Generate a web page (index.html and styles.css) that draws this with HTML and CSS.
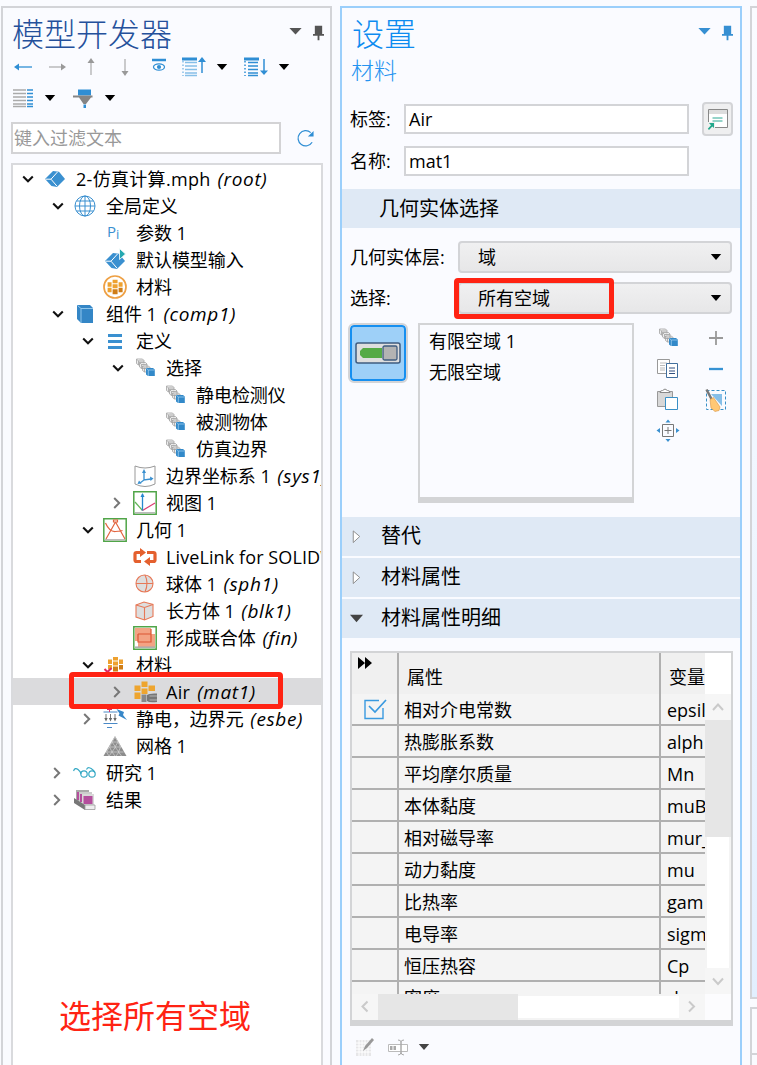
FILE: index.html
```html
<!DOCTYPE html>
<html lang="zh-CN">
<head>
<meta charset="utf-8">
<title>模型开发器</title>
<link rel="stylesheet" href="styles.css">
</head>
<body>
<svg class="defs" aria-hidden="true">
  <symbol id="down" viewBox="0 0 24 24"><path d="M7.2 9.6l4.8 4.6 4.8-4.6" fill="none" stroke="#111" stroke-width="2.1"/></symbol>
  <symbol id="right" viewBox="0 0 24 24"><path d="M8.200 7l5 5-5 5" fill="none" stroke="#777" stroke-width="2"/></symbol>
  <symbol id="caret" viewBox="0 0 12 8"><path d="M.8 1h10.400L6 7z" fill="currentColor"/></symbol>
  <symbol id="pin" viewBox="0 0 12 16"><path d="M2 0h8v9h2v2H7v5H5v-5H0V9h2z" fill="currentColor"/></symbol>
  <symbol id="cube" viewBox="0 0 24 24"><path d="M2 12l8-8 6 .8 6 7.200-8 8-5.500-1z" fill="#3a90d0"/><path d="M2.500 12.200H8M14.500 5L8 12.200l6 7" fill="none" stroke="#fff" stroke-width="1"/></symbol>
  <symbol id="globe" viewBox="0 0 24 24"><g fill="none" stroke="#3a90d0"><circle cx="12" cy="12" r="10"/><ellipse cx="12" cy="12" rx="5.500" ry="10"/><path d="M12 2v20M2 12h20M3.500 7h17M3.500 17h17"/></g></symbol>
  <symbol id="input" viewBox="0 0 24 24"><path d="M2 13l8-8 6 .8 6 7.200-8 8-5.500-1z" fill="#3a90d0"/><path d="M2.500 13.200H8M14.500 6L8 13.200l6 7" fill="none" stroke="#fff" stroke-width="1"/><path d="M16.500.5l6 5.500-6 5.500z" fill="#25a8b0" stroke="#fff" stroke-width=".8"/></symbol>
  <symbol id="bricks" viewBox="0 0 24 24"><g fill="#eea12f"><path d="M10 4.500h5V8h-5zM5 7h4v4.500H5zM10 9h5v4h-5zM5 12.500h4V17H5zM16 7h4v4.500h-4z"/></g><path d="M10 14h5v5h-5zM16 12.500h4V17h-4z" fill="#cf7d17"/></symbol>
  <symbol id="matring" viewBox="0 0 24 24"><circle cx="12" cy="12" r="11" fill="none" stroke="#eea044" stroke-width="1.700"/><use href="#bricks" width="24" height="24" x="-.4" y=".2"/></symbol>
  <symbol id="comp" viewBox="0 0 24 24"><path d="M4 3h13l3 3v15H8l-4-4z" fill="#3486c6"/><path d="M4.500 3.500l3.500 3h12M8 6.500V21" fill="none" stroke="#9ccff2" stroke-width=".9"/></symbol>
  <symbol id="bars" viewBox="0 0 24 24"><path d="M5 5h14v3H5zM5 11h14v3H5zM5 17h14v3H5z" fill="#3a90d0"/></symbol>
  <symbol id="sel" viewBox="0 0 24 24"><g fill="#ececec" stroke="#a2a2a2" stroke-width=".8"><path d="M3.500 3h6l1.500 1.500V9H5.500L3.500 7.500z"/><path d="M3.500 3l2 2H11M5.500 5v4M6.500 6.500h6L14 8v4.500H8.500L6.500 11zM6.500 6.500l2 2H14M8.500 8.500v4M9.500 10h6l1.500 1.500V16h-5.500l-2-1.500zM9.500 10l2 2H17M11.500 12v4"/></g><path d="M13 12h7l1.800 1.500V20H15l-2-1.500z" fill="#3289c9"/><path d="M13.300 12.300l2 1.700h6.200M15.300 14v6" fill="none" stroke="#a9d4f2" stroke-width=".7"/></symbol>
  <symbol id="coord" viewBox="0 0 24 24"><path d="M2 2q10 4 20 0v18q-10 5-20 0z" fill="none" stroke="#999" stroke-width="1"/><path d="M11 8v8l7-1M11 16l-4 3" fill="none" stroke="#3a90d0" stroke-width="1.300"/><path d="M9 9l2-4 2 4zM17 12.500l3.500 2-3 2.500zM4.500 20l1.500-3.500 2.500 3z" fill="#3a90d0"/></symbol>
  <symbol id="view" viewBox="0 0 24 24"><path d="M.8.8h22.400v22.400H.8z" fill="#fff" stroke="#50a548" stroke-width="1.500"/><path d="M2 21h20v1.500H2z" fill="#bbb"/><path d="M9.500 19.500L2 11" stroke="#62b458" stroke-width="1.200"/><path d="M9.500 19.500L22 12" stroke="#dc3d73" stroke-width="1.200"/><path d="M9.500 19.500V3" stroke="#2788ce" stroke-width="1.300"/><path d="M7.500 6l2-4 2 4z" fill="#2788ce"/></symbol>
  <symbol id="geom" viewBox="0 0 24 24"><path d="M.8.8h22.400v22.400H.8z" fill="#fff" stroke="#50a548" stroke-width="1.500"/><path d="M2 21h20v1.500H2z" fill="#bbb"/><path d="M12.500 4L3 21M12.500 4L22 21M2.500 5q4 9 10 8.500 6-.5 7-1M10.500 4h4V2h-4z" fill="none" stroke="#e2643f" stroke-width="1.200"/></symbol>
  <symbol id="link" viewBox="0 0 24 24"><path d="M8 16.500H3.500Q2 16.500 2 15V9q0-1.500 1.500-1.500H8M14 7.500h6.500Q22 7.500 22 9v6q0 1.500-1.500 1.500H16" fill="none" stroke="#e4602e" stroke-width="3.200"/><path d="M7 3v9l6-4.500zM17 12v9l-6-4.500z" fill="#e4602e"/></symbol>
  <symbol id="sphere" viewBox="0 0 24 24"><circle cx="11.500" cy="11.500" r="8.500" fill="#dedede" stroke="#e77857" stroke-width="1.100"/><path d="M3 11.500h17M12 3q4 8 0 17" fill="none" stroke="#e77857" stroke-width="1.100"/></symbol>
  <symbol id="block" viewBox="0 0 24 24"><path d="M3 6l8-3 9 2.500v12L11.500 21 3 18z" fill="#dedede" stroke="#e77857" stroke-width="1.100"/><path d="M3 6l8.500 2.500L20 5.500M11.500 8.500V21" fill="none" stroke="#e77857" stroke-width="1.100"/></symbol>
  <symbol id="union" viewBox="0 0 24 24"><path d="M.8.8h22.400v22.400H.8z" fill="#fff" stroke="#50a548" stroke-width="1.500"/><path d="M2 2h16v13H2zM5 8h17v13H5z" fill="#f3a384"/><path d="M5 8h13V3M5 8v8h13V8" fill="none" stroke="#dc5633" stroke-width="1.200"/><path d="M2 21.200h20" stroke="#aaa" stroke-width="1.500"/></symbol>
  <symbol id="mats" viewBox="0 0 24 24"><use href="#bricks" width="24" height="24" y="-.5"/><path d="M1.500 16l3 3 4-4" fill="none" stroke="#dd2a63" stroke-width="2"/></symbol>
  <symbol id="air" viewBox="0 0 24 24"><path d="M8.500 1.500h6V7h-6zM1.500 5.500h6V11h-6zM15.500 5.500h6.500V11h-6.500zM8.500 8.500h6V14h-6zM1.500 12.500h6V19h-6z" fill="#eea52f"/><path d="M8.500 14.500h5v7.500h-5z" fill="#888"/><path d="M14 15q2-2 10-1.500v8.500q-8 1-10-1z" fill="#777"/><path d="M16.500 16H24M16.500 20H24" stroke="#bbb" stroke-width=".9"/></symbol>
  <symbol id="esbe" viewBox="0 0 24 24"><path d="M.5 5h14M.5 16.500h14M4 20.500h5" stroke="#4a89c6" stroke-width="1"/><path d="M6.500 0v5M4 2.500h5" stroke="#d5336b" stroke-width="1"/><path d="M3 7v5M7.500 7v5M12 7v5" stroke="#777"/><path d="M1.300 11h3.400L3 14.500zM5.800 11h3.400l-1.700 3.500zM10.300 11h3.400L12 14.500z" fill="#666"/><path d="M13.500 2l7.500 3-1 3 4 5-8.500-4.500 1-2z" fill="#3787c8"/></symbol>
  <symbol id="mesh" viewBox="0 0 24 24"><path d="M12 2l11.500 20H.5z" fill="#8d8d8d"/><path d="M9 8h6M6.500 13h11M3.500 18h17M12 3l-3 5 3.500 5L9 18l3 4M12 3l3 5-3 5 4 5-3 4M9 8l-2.500 5L9 18l-3 4M15 8l2.500 5-2 5 3 4M6.500 13l-3 5 2.500 4" fill="none" stroke="#d4d4d4" stroke-width=".7"/></symbol>
  <symbol id="study" viewBox="0 0 24 24"><g fill="none" stroke="#36a9c5" stroke-width="1.200"><path d="M.5 10Q2 6 5 8.500T8 13M13.500 8.500q2-4 7 1l1.500 2"/><circle cx="11" cy="13" r="3.200"/><circle cx="19" cy="13" r="3.200"/></g></symbol>
  <symbol id="results" viewBox="0 0 24 24"><path d="M3 2h13v12H3z" fill="#aaa"/><path d="M4 4h9v8H4z" fill="#b44e9c"/><path d="M6 4h13v12H6z" fill="#ccc"/><path d="M7 6h9v8H7z" fill="#b44e9c"/><path d="M9 6h12v12H9z" fill="#d8d8d8"/><path d="M10.500 8h9v8h-9z" fill="#b44e9c"/><path d="M1 10l11 7v5L1 15z" fill="#777"/><path d="M12 17h10v4.500H12z" fill="#eee" stroke="#999" stroke-width=".8"/></symbol>
</svg>

<div class="app">
<section class="panel builder">
  <header class="panel-head">
    <h1>模型开发器</h1>
    <svg class="head-caret" viewBox="0 0 14 8"><path d="M0 0h14L7 7.500z" fill="currentColor"/></svg>
    <svg class="head-pin"><use href="#pin"/></svg>
  </header>
  <div class="toolbar">
    <svg class="tool" viewBox="0 0 24 24"><path d="M6 12h15" stroke="#2f8ed4" stroke-width="1.300"/><path d="M3 12l5-3.500v7z" fill="#2f8ed4"/></svg>
    <svg class="tool" viewBox="0 0 24 24"><path d="M4 12h14" stroke="#999"/><path d="M21 12l-5-3.500v7z" fill="#999"/></svg>
    <svg class="tool" viewBox="0 0 24 24"><path d="M12 6v14" stroke="#999"/><path d="M12 3L8.500 8h7z" fill="#999"/></svg>
    <svg class="tool" viewBox="0 0 24 24"><path d="M12 4v14" stroke="#999"/><path d="M12 21l-3.500-5h7z" fill="#999"/></svg>
    <svg class="tool" viewBox="0 0 24 24"><path d="M5 5h14" stroke="#2f8ed4" stroke-width="2.500"/><ellipse cx="12" cy="12" rx="5.500" ry="3.200" fill="#fff" stroke="#2f8ed4" stroke-width="1.300"/><circle cx="12" cy="12" r="2.100" fill="#2f8ed4"/></svg>
    <svg class="tool" viewBox="0 0 24 24"><path d="M1 4h15" stroke="#2f8ed4" stroke-width="3"/><path d="M4 7.500h12M4 11h12M4 14.500h12M4 18h12M4 20.500h12" stroke="#86bfe8" stroke-width="1.500"/><path d="M2 6v15" stroke="#86bfe8" stroke-dasharray="1.500 2" stroke-width="1.500"/><path d="M21 6v12" stroke="#2f8ed4" stroke-width="1.500"/><path d="M21 2l-4 5h8z" fill="#2f8ed4"/></svg>
    <svg class="caret c1"><use href="#caret"/></svg>
    <svg class="tool t2" viewBox="0 0 24 24"><path d="M1 4h15" stroke="#2f8ed4" stroke-width="3"/><path d="M5 7.500h10M5 11h10M5 14.500h10M5 18h10M5 20.500h10" stroke="#2f8ed4" stroke-width="1.700"/><path d="M2 6v15" stroke="#2f8ed4" stroke-dasharray="1.500 2" stroke-width="1.500"/><path d="M21 4v13" stroke="#2f8ed4" stroke-width="1.500"/><path d="M21 20l-4-4.500h8z" fill="#2f8ed4"/></svg>
    <svg class="caret c1"><use href="#caret"/></svg>
  </div>
  <div class="toolbar second">
    <svg class="tool" viewBox="0 0 24 24"><path d="M2 4h13M2 7.500h13M2 11h13M2 14.500h13M2 18h13M2 20.500h13" stroke="#aaa" stroke-width="1.500"/><path d="M16 4h6M16 7.500h6M16 11h6M16 14.500h6M16 18h6M16 20.500h6" stroke="#2f8ed4" stroke-width="1.700"/></svg>
    <svg class="caret c2"><use href="#caret"/></svg>
    <svg class="tool t3" viewBox="0 0 24 24"><path d="M7 3.500h13v6H7z" fill="#2f8ed4"/><path d="M2 9.500h19.500v2H20L15 18h-2.500L8 11.500H2z" fill="#858585"/><path d="M12.500 18.500H15V22h-2.500z" fill="#2f8ed4"/></svg>
    <svg class="caret c2"><use href="#caret"/></svg>
  </div>
  <div class="filter">
    <div class="filter-box">键入过滤文本</div>
    <svg class="refresh" viewBox="0 0 20 20"><path d="M15.500 3.800A8 8 0 1 0 17 14" fill="none" stroke="#2f8ed4" stroke-width="1.300"/><path d="M18.500 2v6h-6z" fill="#2f8ed4"/></svg>
  </div>
  <div class="tree">
    <div class="row l0"><svg class="tw"><use href="#down"/></svg><svg class="ic"><use href="#cube"/></svg><span class="wide">2-仿真计算.mph <i>(root)</i></span></div>
    <div class="row l1"><svg class="tw"><use href="#down"/></svg><svg class="ic"><use href="#globe"/></svg><span>全局定义</span></div>
    <div class="row l2"><b class="tw"></b><em class="ic pi">P<sub>i</sub></em><span>参数 1</span></div>
    <div class="row l2"><b class="tw"></b><svg class="ic"><use href="#input"/></svg><span>默认模型输入</span></div>
    <div class="row l2"><b class="tw"></b><svg class="ic"><use href="#matring"/></svg><span>材料</span></div>
    <div class="row l1"><svg class="tw"><use href="#down"/></svg><svg class="ic"><use href="#comp"/></svg><span>组件 1 <i>(comp1)</i></span></div>
    <div class="row l2"><svg class="tw"><use href="#down"/></svg><svg class="ic"><use href="#bars"/></svg><span>定义</span></div>
    <div class="row l3"><svg class="tw"><use href="#down"/></svg><svg class="ic"><use href="#sel"/></svg><span>选择</span></div>
    <div class="row l4"><b class="tw"></b><svg class="ic"><use href="#sel"/></svg><span>静电检测仪</span></div>
    <div class="row l4"><b class="tw"></b><svg class="ic"><use href="#sel"/></svg><span>被测物体</span></div>
    <div class="row l4"><b class="tw"></b><svg class="ic"><use href="#sel"/></svg><span>仿真边界</span></div>
    <div class="row l3"><b class="tw"></b><svg class="ic"><use href="#coord"/></svg><span>边界坐标系 1 <i>(sys1)</i></span></div>
    <div class="row l3"><svg class="tw"><use href="#right"/></svg><svg class="ic"><use href="#view"/></svg><span>视图 1</span></div>
    <div class="row l2"><svg class="tw"><use href="#down"/></svg><svg class="ic"><use href="#geom"/></svg><span>几何 1</span></div>
    <div class="row l3"><b class="tw"></b><svg class="ic"><use href="#link"/></svg><span class="product">LiveLink for SOLIDW</span></div>
    <div class="row l3"><b class="tw"></b><svg class="ic"><use href="#sphere"/></svg><span>球体 1 <i>(sph1)</i></span></div>
    <div class="row l3"><b class="tw"></b><svg class="ic"><use href="#block"/></svg><span>长方体 1 <i>(blk1)</i></span></div>
    <div class="row l3"><b class="tw"></b><svg class="ic"><use href="#union"/></svg><span>形成联合体 <i>(fin)</i></span></div>
    <div class="row l2"><svg class="tw"><use href="#down"/></svg><svg class="ic"><use href="#mats"/></svg><span>材料</span></div>
    <div class="row l3 selected"><svg class="tw"><use href="#right"/></svg><svg class="ic"><use href="#air"/></svg><span class="wide">Air <i>(mat1)</i></span></div>
    <div class="row l2"><svg class="tw"><use href="#right"/></svg><svg class="ic"><use href="#esbe"/></svg><span>静电，边界元 <i>(esbe)</i></span></div>
    <div class="row l2"><b class="tw"></b><svg class="ic"><use href="#mesh"/></svg><span>网格 1</span></div>
    <div class="row l1"><svg class="tw"><use href="#right"/></svg><svg class="ic"><use href="#study"/></svg><span>研究 1</span></div>
    <div class="row l1"><svg class="tw"><use href="#right"/></svg><svg class="ic"><use href="#results"/></svg><span>结果</span></div>
  </div>
  <div class="mark mark-tree"></div>
  <div class="note">选择所有空域</div>
</section>

<section class="panel settings">
  <header class="panel-head">
    <h1>设置</h1>
    <svg class="head-caret" viewBox="0 0 14 8"><path d="M0 0h14L7 7.500z" fill="currentColor"/></svg>
    <svg class="head-pin"><use href="#pin"/></svg>
  </header>
  <h2>材料</h2>
  <div class="field"><label>标签:</label><div class="input">Air</div>
    <div class="goto"><svg viewBox="0 0 22 22"><path d="M1.500 1.500h19v18h-19z" fill="#fff" stroke="#888"/><path d="M2 2h18v4H2z" fill="#ddd"/><path d="M5.500 10h10M5.500 13h10" stroke="#2ba893"/><path d="M0 14h8v8H0z" fill="#f0f0f0"/><path d="M2 15h5v5l-1.700-1.500L2 22l-1.200-1.200 3.200-3.500z" fill="#22a98c"/></svg></div>
  </div>
  <div class="field second"><label>名称:</label><div class="input">mat1</div></div>
  <div class="section first"><span>几何实体选择</span></div>
  <div class="pick"><label>几何实体层:</label><div class="select">域<svg class="caret"><use href="#caret"/></svg></div></div>
  <div class="pick second"><label>选择:</label><div class="select">所有空域<svg class="caret"><use href="#caret"/></svg></div></div>
  <div class="entities">
    <div class="toggle"><svg viewBox="0 0 46 22"><rect x="1" y="1" width="44" height="20" rx="2" fill="#dedede" stroke="#3f5c80" stroke-width="1.500"/><path d="M8 6h19v10H8l-3-3V9z" fill="#55aa45"/><rect x="28" y="4" width="14" height="14" rx="1.500" fill="#b3b3b3" stroke="#3f5c80" stroke-width="1.300"/></svg></div>
    <div class="list"><p>有限空域 1</p><p>无限空域</p></div>
    <div class="actions">
      <svg><use href="#sel"/></svg>
      <svg viewBox="0 0 24 24"><path d="M12 5v14M5 12h14" stroke="#999" stroke-width="1.800"/></svg>
      <svg viewBox="0 0 24 24"><path d="M1.500 2.500h12v14h-12z" fill="#fff" stroke="#999"/><path d="M4 6h7M4 8.500h5M4 11h5M4 13h5" stroke="#bbb"/><path d="M10.500 6.500h11v14h-11z" fill="#fff" stroke="#416f9e"/><path d="M13 11h6M13 14h6M13 16.500h6" stroke="#304f80" stroke-width="1.200"/></svg>
      <svg viewBox="0 0 24 24"><path d="M5 12h14" stroke="#3692d3" stroke-width="2.300"/></svg>
      <svg viewBox="0 0 24 24"><path d="M1.500 3.500h15v15h-15z" fill="#d8d8d8" stroke="#999"/><path d="M4 4.500q0-2 2.500-2 2.500-3 5 0 2.500 0 2.500 2z" fill="#fff" stroke="#888"/><path d="M9.500 9.500h12v12h-12z" fill="#fff" stroke="#3a90c6"/></svg>
      <svg viewBox="0 0 24 24"><path d="M2.500 2.500h19v19h-19z" fill="none" stroke="#3a90c6" stroke-dasharray="3 2"/><path d="M7 6h11v12z" fill="#86bfe8"/><path d="M2.500 1.500L8 12" stroke="#777" stroke-width="2.500"/><path d="M6 11.500l3.500-2 6.500 9.500-1 3.500-4 1L7 20z" fill="#ffc875" stroke="#d99340" stroke-width=".6"/></svg>
      <svg viewBox="0 0 24 24"><path d="M6.500 5.500h11v12h-11z" fill="none" stroke="#777"/><path d="M12 8v7M8.500 11.500h7" stroke="#777"/><path d="M9.500 3.500L12 .5l2.500 3zM9.500 20l2.500 3 2.500-3zM4 9L.5 11.500 4 14zM20 9l3.500 2.500L20 14z" fill="#3a90d0"/></svg>
    </div>
  </div>
  <div class="section"><svg viewBox="0 0 14 16"><path d="M3.500 2L10.500 8l-7 6.500z" fill="#fff" stroke="#888"/></svg><span>替代</span></div>
  <div class="section"><svg viewBox="0 0 14 16"><path d="M3.500 2L10.500 8l-7 6.500z" fill="#fff" stroke="#888"/></svg><span>材料属性</span></div>
  <div class="section"><svg viewBox="0 0 14 16"><path d="M0 4h14L7 12z" fill="#444"/></svg><span>材料属性明细</span></div>
  <div class="grid">
    <div class="cells">
      <div class="tr th"><div class="td ff"><svg viewBox="0 0 14 12"><path d="M0 0l7 6-7 6zM7 0l7 6-7 6z"/></svg></div><div class="td">属性</div><div class="td">变量</div></div>
      <div class="tr"><div class="td check"><svg viewBox="0 0 24 22"><path d="M16 2.500H2v18h18V10" fill="none" stroke="#3a9ae0" stroke-width="1.400"/><path d="M6 8l6 6L23 2" fill="none" stroke="#3a9ae0" stroke-width="1.700"/></svg></div><div class="td">相对介电常数</div><div class="td">epsil</div></div>
      <div class="tr"><div class="td"></div><div class="td">热膨胀系数</div><div class="td">alph</div></div>
      <div class="tr"><div class="td"></div><div class="td">平均摩尔质量</div><div class="td">Mn</div></div>
      <div class="tr"><div class="td"></div><div class="td">本体黏度</div><div class="td">muB</div></div>
      <div class="tr"><div class="td"></div><div class="td">相对磁导率</div><div class="td">mur_</div></div>
      <div class="tr"><div class="td"></div><div class="td">动力黏度</div><div class="td">mu</div></div>
      <div class="tr"><div class="td"></div><div class="td">比热率</div><div class="td">gam</div></div>
      <div class="tr"><div class="td"></div><div class="td">电导率</div><div class="td">sigm</div></div>
      <div class="tr"><div class="td"></div><div class="td">恒压热容</div><div class="td">Cp</div></div>
      <div class="tr"><div class="td"></div><div class="td">密度</div><div class="td">rho</div></div>
    </div>
    <div class="vbar"><div class="gap"></div><svg class="arrow" viewBox="0 0 26 26"><path d="M8 16l5-5.500 5 5.500"/></svg><div class="vthumb"></div><div class="vtrack"></div><svg class="arrow" viewBox="0 0 26 26"><path d="M8 10.500l5 5.500 5-5.500"/></svg></div>
    <div class="hbar"><svg class="arrow" viewBox="0 0 26 26"><path d="M15.500 7.500l-5 5 5 5"/></svg><div class="hthumb"></div><div class="htrack"></div><svg class="arrow" viewBox="0 0 26 26"><path d="M10 7.500l5 5-5 5"/></svg></div>
  </div>
  <div class="foot">
    <svg viewBox="0 0 24 24"><path d="M3 5h15v16H3z" fill="#e6e6e8"/><path d="M3 8h15M3 11h15M3 14h15M3 17h15M6 5v16M9 5v16M12 5v16M15 5v16" stroke="#fff"/><path d="M10 16l2-5 7-8 2 2-7 8z" fill="#999"/></svg>
    <svg class="rename" viewBox="0 0 24 24"><path d="M2.500 9.500h19v7h-19z" fill="#fff" stroke="#bbb"/><path d="M4 11h2.500v4H4zM7.500 11H10v4H7.500z" fill="#aaa"/><path d="M12 5q3 0 3 2v10q0 3-3 3M18 5q-3 0-3 2v10q0 3 3 3" fill="none" stroke="#aaa"/></svg>
    <svg class="caret"><use href="#caret"/></svg>
  </div>
  <div class="mark mark-select"></div>
</section>

<aside class="edge"><div class="edge-top"></div><div class="edge-bottom"><div></div></div></aside>
</div>
</body>
</html>
```
FILE: styles.css
```css
* { box-sizing: border-box; }
body {
  margin: 0;
  height: 1065px;
  overflow: hidden;
  background: #fafbff;
  color: #000;
  font: 18px/27px "Open Sans", "Noto Sans CJK SC", sans-serif;
}
svg { display: block; flex: none; overflow: visible; }
.defs { position: absolute; width: 0; height: 0; }
.app {
  display: flex;
  height: 1065px;
  padding: 6px 0 0 1px;
  overflow: hidden;
}
.panel { position: relative; flex: none; height: 1065px; border: 2px solid #d3d4d8; }
.builder { width: 331px; padding: 0 7px 0 8px; }
.settings { width: 402px; margin-left: 8px; border-color: #9bcffb; }

.panel-head { display: flex; height: 48px; color: #555; }
h1 {
  flex: 1;
  margin: 1px 0 0 1px;
  font: 300 32px/46px "Noto Sans CJK SC", sans-serif;
  color: #24509b;
}
.head-caret { width: 13px; height: 7px; margin-top: 20px; }
.head-pin { width: 11px; height: 16px; margin: 17px 0 0 11px; }
.builder .head-pin { margin-right: -1px; }
.settings .panel-head { padding: 0 7px 0 9px; color: #368fd2; }
.settings h1 { color: #0d8bf0; }

.toolbar { display: flex; align-items: center; height: 24px; gap: 10px; }
.toolbar.second { margin-top: 7px; gap: 0; }
.tool { width: 24px; height: 24px; }
.builder .toolbar:first-of-type { margin-top: -1px; }
.caret { width: 12px; height: 8px; color: #000; }
.c1 { margin-left: 1px; }
.t2 { margin-left: 5px; }
.c2 { margin-left: 9px; }
.t3 { margin-left: 15px; }

.filter { display: flex; align-items: center; gap: 15px; margin-top: 12px; }
.filter-box {
  width: 270px; height: 32px;
  border: 2px solid #d3d3d5;
  background: #fff;
  padding-left: 1px;
  line-height: 29px;
  color: #999;
}
.refresh { width: 19px; height: 19px; }
.tree {
  width: 312px; height: 920px;
  margin-top: 9px;
  border: 2px solid #d9dadd;
  background: #fff;
  overflow: hidden;
}
.row { display: flex; align-items: center; height: 27px; white-space: nowrap; letter-spacing: -.05px; }
.row span { margin-left: 9px; padding-top: 2px; }
.row .wide { letter-spacing: .3px; }
.row .product { letter-spacing: .1px; }
.row i { margin-left: 2px; font-size: 19px; line-height: 20px; letter-spacing: .65px; }
.tw { flex: none; width: 24px; height: 24px; margin: 0 3px; }
.ic { flex: none; width: 24px; height: 24px; }
.l1 { padding-left: 30px; }
.l2 { padding-left: 60px; }
.l3 { padding-left: 90px; }
.l4 { padding-left: 120px; }
.selected { background: #dbdbdd; }
.pi { padding-left: 4px; font: 15px/20px "Open Sans", sans-serif; color: #3a90d0; }
.pi sub { font-size: 13px; line-height: 0; vertical-align: -2px; }

.mark { position: absolute; border: 5px solid #ff2313; border-radius: 4px; }
.mark-tree { left: 66px; top: 664px; width: 214px; height: 37px; }
.mark-select { left: 112px; top: 270px; width: 160px; height: 41px; }
.note {
  position: absolute; left: 56px; top: 982px;
  font: 32px/48px "Noto Sans CJK SC", sans-serif;
  color: #ff2313;
}

h2 {
  margin: -2px 0 0 9px;
  font: 300 23px/30px "Noto Sans CJK SC", sans-serif;
  color: #2493f0;
}
.field { display: flex; align-items: center; height: 34px; margin-top: 18px; padding-left: 8px; }
.field label { width: 54px; }
.field.second { height: 30px; margin-top: 10px; }
.input {
  width: 285px; height: 30px;
  border: 2px solid #d3d4d7;
  background: #fff;
  padding-left: 3px;
  line-height: 26px;
}
.goto {
  display: grid; place-items: center;
  width: 31px; height: 34px;
  margin-left: 13px;
  border: 2px solid #d3d4d7;
  border-radius: 4px;
  background: #efeff0;
}
.goto svg { width: 22px; height: 22px; }
.section {
  display: flex; align-items: center;
  height: 39px;
  margin-bottom: 2px;
  padding-left: 8px;
  background: #dfe9f5;
  font-size: 20px;
}
.section svg { width: 13px; height: 15px; }
.section span { margin: -3px 0 0 18px; }
.section.first { margin: 13px 0; padding-left: 37px; }
.section.first span { margin: 0; }
.pick { display: flex; align-items: center; height: 32px; padding-left: 8px; }
.pick label { width: 108px; white-space: nowrap; }
.pick.second { margin-top: 9px; }
.select {
  display: flex; align-items: center; justify-content: space-between;
  width: 274px; height: 32px;
  padding: 0 8px 0 18px;
  border: 2px solid #d3d4d7;
  border-radius: 4px;
  background: linear-gradient(#f0f0f1, #e7e7e8);
}
.entities { display: flex; height: 180px; margin: 9px 0 14px 6px; }
.toggle {
  display: grid; place-items: center;
  width: 56px; height: 56px;
  margin: 2px;
  border: 2px solid #168ff0;
  border-radius: 4px;
  outline: 2px solid #d3d4d7;
  background: #9ed0f8;
}
.toggle svg { width: 46px; height: 22px; }
.list {
  width: 216px; height: 180px;
  margin-left: 10px;
  padding: 1px 0 0 9px;
  border: 2px solid #d3d4d6;
  border-bottom-width: 6px;
}
.list p { margin: 0; line-height: 31px; }
.actions {
  display: grid;
  grid-template-columns: 24px 24px;
  grid-auto-rows: 24px;
  gap: 7px 24px;
  margin: 3px 0 0 22px;
}
.actions svg { width: 24px; height: 24px; }

.grid {
  display: grid;
  grid-template: 341px 26px / 353px 26px;
  width: 383px; height: 375px;
  margin: 13px 0 0 8px;
  border: 2px solid #d3d4d6;
  border-bottom-width: 6px;
  background: #fcfcfe;
}
.cells { overflow: hidden; background: #f4f4f4; }
.tr { display: grid; grid-template: 32px / 47px 262px 60px; height: 32px; }
.td {
  padding-left: 5px;
  border-right: 2px solid #b0b0b0;
  border-bottom: 2px solid #b0b0b0;
  line-height: 33px;
  white-space: nowrap;
}
.td:last-child { padding-left: 6px; }
.tr.th { grid-template-rows: 41px; height: 41px; background: #f0f0f0; }
.th .td { border-bottom: 0; padding: 6px 0 0 8px; line-height: 36px; }
.ff svg { width: 14px; height: 12px; }
.th .ff { padding: 4px 0 0 6px; }
.td.check { padding: 4px 0 0 11px; }
.check svg { width: 24px; height: 22px; }
.vbar { background: #fff; }
.gap { height: 41px; }
.arrow { width: 26px; height: 26px; background: #f6f6f6; fill: none; stroke: #cacaca; stroke-width: 2; }
.vthumb { height: 117px; background: #e6e6e6; }
.vtrack { height: 131px; border-right: 2px solid #f4f4f4; border-left: 2px solid #f4f4f4; }
.hbar { display: flex; width: 353px; background: #fff; }
.hthumb { width: 140px; background: #e6e6e6; }
.htrack { width: 161px; border: solid #f4f4f4; border-width: 2px 0; }
.foot { display: flex; align-items: center; height: 24px; margin: 9px 0 0 11px; }
.foot svg { width: 24px; height: 24px; }
.foot .rename { margin-left: 9px; }
.foot .caret { width: 12px; height: 8px; margin-left: 8px; color: #444; }

.edge { flex: none; width: 20px; margin-left: 8px; }
.edge-top { height: 993px; border: 2px solid #d3d4d8; background: linear-gradient(#fafbff, #f5f9ff 30%, #e2effe); }
.edge-bottom { height: 80px; margin-top: 8px; border: 2px solid #d3d4d8; }
.edge-bottom div { height: 46px; border-bottom: 2px solid #d3d4d8; }
```
